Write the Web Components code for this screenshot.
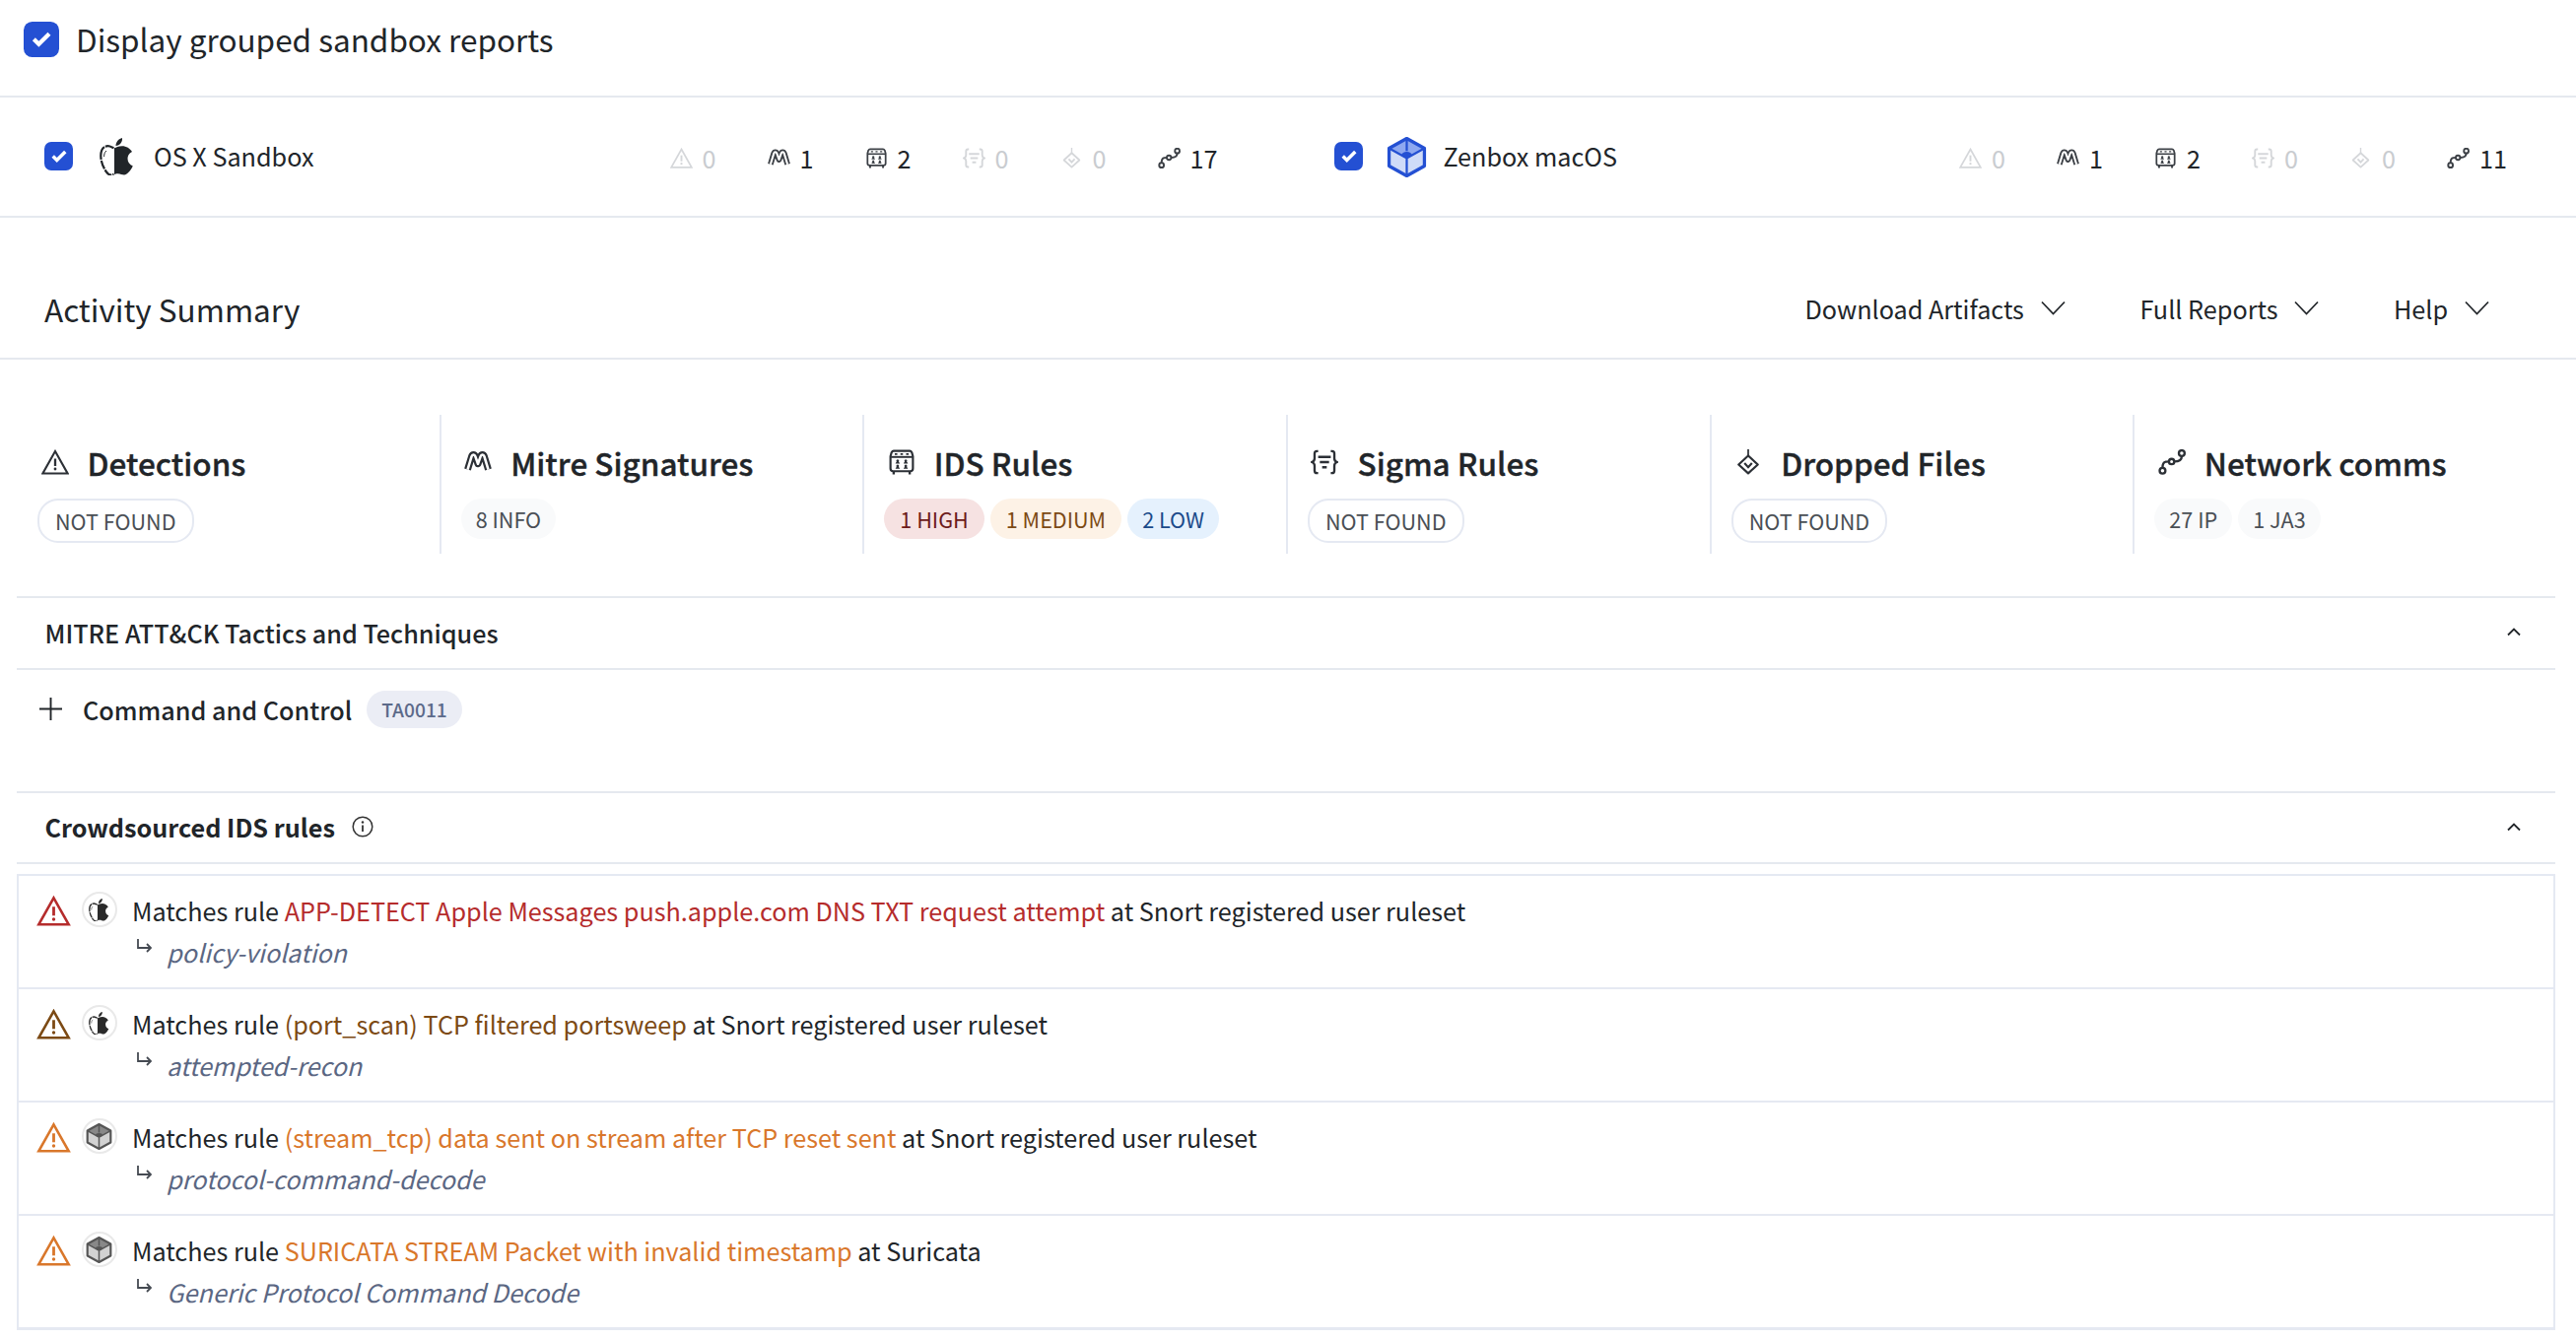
<!doctype html>
<html><head><meta charset="utf-8"><title>Activity Summary</title>
<style>
html,body{margin:0;padding:0;background:#fff;height:1360px;overflow:hidden}
body{font-family:"Noto Sans CJK SC","Noto Sans",sans-serif;color:#212529;font-size:25.2px}
</style></head><body>
<template id="svgs">
<svg id="warn" viewBox="0 0 24 22"><path d="M12 1.6 22.8 20.8H1.2Z" fill="none" stroke="currentColor" stroke-width="1.8" stroke-linejoin="miter"/><path d="M12 8v6.4" stroke="currentColor" stroke-width="2" fill="none"/><circle cx="12" cy="17" r="1.2" fill="currentColor"/></svg>
<svg id="mitre" viewBox="0 0 24 18"><path d="M3 15.500 6.500 4c.7-2 2.500-2 3.200 0L12 10.500 14.300 4c.7-2 2.500-2 3.200 0L21 15.500" fill="none" stroke="currentColor" stroke-width="6" stroke-linejoin="round"/><path d="M3 15.500 6.500 4c.7-2 2.500-2 3.200 0L12 10.500 14.300 4c.7-2 2.500-2 3.200 0L21 15.500" fill="none" stroke="#fff" stroke-width="2.200" stroke-linejoin="round"/></svg>
<svg id="ids" viewBox="0 0 24 24"><path d="M4.500 1.500h15c1 0 1.500.5 2 1.500l1 3.500V18c0 1.500-1 2.500-2.500 2.500H4c-1.500 0-2.500-1-2.500-2.500V6.500l1-3.500c.5-1 1-1.500 2-1.500Z" fill="none" stroke="currentColor" stroke-width="2"/><path d="M2 7.200h20" stroke="currentColor" stroke-width="1.800"/><path d="M5.500 4.400h2.400M10.800 4.400h2.400M16.100 4.400h2.400" stroke="currentColor" stroke-width="1.600"/><path d="M6.200 13.400c0-1 .7-1.400 1.100-1.700a1.300 1.300 0 1 1 1.800 0c.4.300 1.100.7 1.100 1.700ZM13.800 13.400c0-1 .7-1.400 1.100-1.700a1.300 1.300 0 1 1 1.800 0c.4.300 1.100.7 1.100 1.700ZM6.200 18.300c0-1 .7-1.400 1.100-1.700a1.300 1.300 0 1 1 1.800 0c.4.300 1.100.7 1.100 1.700ZM13.800 18.300c0-1 .7-1.400 1.100-1.700a1.300 1.300 0 1 1 1.800 0c.4.300 1.100.7 1.100 1.700Z" fill="currentColor"/><path d="M4.500 20.500V23.500M19.500 20.500V23.500" stroke="currentColor" stroke-width="2.200"/></svg>
<svg id="sigma" viewBox="0 0 24 22"><path d="M6.500 1.500H5.400C4 1.500 3.400 2.300 3.400 3.600v4.200c0 1.600-.8 2.600-2.200 3.200 1.400.6 2.200 1.600 2.200 3.200v4.200c0 1.300.6 2.100 2 2.100h1.100M17.500 1.500h1.100c1.400 0 2 .8 2 2.100v4.200c0 1.600.8 2.600 2.200 3.200-1.400.6-2.200 1.600-2.200 3.200v4.200c0 1.300-.6 2.100-2 2.100h-1.100" fill="none" stroke="currentColor" stroke-width="2"/><path d="M6.500 6.500h11M8 11h8M10 15.500h4" stroke="currentColor" stroke-width="2.200" fill="none"/></svg>
<svg id="drop" viewBox="0 0 20 24"><path d="M10 0v6" stroke="currentColor" stroke-width="1.600"/><path d="M10 6 19 14.300 10 22.500 1 14.300Z" fill="none" stroke="currentColor" stroke-width="2" stroke-linejoin="round"/><path d="M6.500 13l3.500 3.800 3.500-3.800" fill="none" stroke="currentColor" stroke-width="2"/></svg>
<svg id="net" viewBox="0 0 24 22"><circle cx="3.800" cy="18.500" r="2.500" fill="none" stroke="currentColor" stroke-width="2"/><circle cx="20.500" cy="3.300" r="2.500" fill="none" stroke="currentColor" stroke-width="2"/><circle cx="11.700" cy="10.500" r="2.300" fill="none" stroke="currentColor" stroke-width="2"/><path d="M3.800 16c0-3 .6-5 2.800-5.300 1.100-.1 1.800-.2 2.800-.2M14 10.500c3.500 0 6.500-.8 6.500-4.700" fill="none" stroke="currentColor" stroke-width="2"/></svg>
<svg id="apple" viewBox="0 0 35 38"><path d="M15 10.300C17 9.800 19 8.200 23 8.200 27 8.200 31 10.500 33 14 29.500 16 28.500 18.500 28.500 21 28.500 24.500 30.500 27 33.800 28.500 32 32 28.500 37.500 25 37.500 22.500 37.500 21.500 36.200 18.500 36.200 17 36.200 16 36.500 15 36.900Z" fill="currentColor"/><path d="M16.500 8C16.500 4 19.500.8 23 0 23.500 4 20.500 8 16.500 8Z" fill="currentColor"/><path d="M14.500 10.300C12.500 9.400 10.500 8.200 8.500 8.200 4 8.200 1.300 12 1.300 18 1.300 25 4.500 31 7 34.500 8.500 36.500 9.500 37.500 11 37.500 12.500 37.500 13.500 37 14.500 36.800" fill="none" stroke="currentColor" stroke-width="2.200" stroke-dasharray="9 1 14 1 9 1"/><path d="M7 13c-1.800 1.500-2.400 3.500-2.400 6" fill="none" stroke="currentColor" stroke-width="1"/></svg>
<svg id="cube" viewBox="0 0 40 40"><path d="M20 1.500 37.500 11.200V28.800L20 38.500 2.500 28.800V11.200Z" fill="var(--f2)"/><path d="M20 1.500 37.500 11.200 20 21 2.500 11.200Z" fill="var(--f1)"/><path d="M2.500 11.200 20 21 37.500 11.200M20 21V38.500M20 1.500V14" fill="none" stroke="currentColor" stroke-width="2.200"/><path d="M20 1.500 37.500 11.200V28.800L20 38.500 2.500 28.800V11.200Z" fill="none" stroke="currentColor" stroke-width="3.200" stroke-linejoin="round"/><ellipse cx="20" cy="17.500" rx="5" ry="2.800" fill="currentColor"/></svg>
</template>
<script>
const tpl=document.getElementById('svgs').content;
const icon=n=>tpl.getElementById(n).outerHTML;
class Base extends HTMLElement{
 constructor(){super();this.attachShadow({mode:'open'});}
 connectedCallback(){this.shadowRoot.innerHTML=`<style>${this.css()}</style>`+this.html();}
 css(){return ':host{display:block}'} html(){return '<slot></slot>'}
}
class XIcon extends Base{
 css(){return `:host{display:inline-flex;flex:none;width:var(--w,24px);height:var(--h,24px);color:inherit}svg{display:block;width:100%;height:100%}`}
 html(){return icon(this.getAttribute('name'))}
}
class XCheck extends Base{
 css(){return `:host{display:inline-flex;flex:none;width:var(--s,36px);height:var(--s,36px);border-radius:calc(var(--s,36px)*.24);background:#2450d3;align-items:center;justify-content:center}svg{width:62%;height:62%;display:block}`}
 html(){return `<svg viewBox="0 0 20 20"><path d="M3 10.500l4.500 4.500L17 5.500" fill="none" stroke="#fff" stroke-width="3.800"/></svg>`}
}
class XToggle extends Base{
 css(){return `:host{display:flex;align-items:center;gap:17px;height:97px;padding:0 0 0 24px;border-bottom:2px solid #e5e9ef;box-sizing:content-box;font-size:31.5px;line-height:40px}
 x-check{--s:36px;margin-top:-18px} span{margin-top:-20px}`}
 html(){return `<x-check></x-check><span><slot></slot></span>`}
}
class XBar extends Base{
 css(){return `:host{display:grid;grid-template-columns:1309px 1305px;height:120px;border-bottom:2px solid #e5e9ef}`}
}
class XSandbox extends Base{
 css(){return `:host{display:flex;align-items:center;padding:0 var(--pr,35.5px) 0 45px;font-size:25.2px;line-height:34px}
 .l{display:flex;align-items:center;flex:1;min-width:0}
 .l span{margin-top:-2px}
 x-check{--s:29px;margin-right:27px;margin-top:-2px} x-icon{--w:35px;--h:38px;margin-right:20px;color:#212529}
 .cube{--w:41px;--h:41px;color:#2450d3;--f1:#8ea8f0;--f2:#cfdbf8;margin-right:16.5px;margin-left:-3px}
 .r{display:grid;grid-template-columns:repeat(6,99px);margin-top:2px}`}
 html(){const c=this.hasAttribute('cube');return `<div class="l"><x-check></x-check>${c?'<x-icon class="cube" name="cube"></x-icon>':'<x-icon name="apple"></x-icon>'}<span>${this.getAttribute('label')}</span></div><div class="r"><slot></slot></div>`}
}
class XCount extends Base{
 css(){return `:host{display:flex;align-items:center;gap:10px;font-size:25.2px;line-height:34px;color:#212529}
 :host([off]){color:#c9ccd0} x-icon{--w:23px;--h:21px;color:#3c4046}:host([off]) x-icon{color:#d5d7da}`}
 html(){return `<x-icon name="${this.getAttribute('i')}"></x-icon><slot></slot>`}
}
class XHead extends Base{
 css(){return `:host{display:flex;align-items:center;height:144px;box-sizing:border-box;padding:41px 0 0 45px;border-bottom:2px solid #e5e9ef;font-size:31.5px;line-height:44px}
 h2{font:inherit;margin:0;flex:1} .m{display:flex;align-items:center}`}
 html(){return `<h2>${this.getAttribute('label')}</h2><div class="m"><slot></slot></div>`}
}
class XMenu extends Base{
 css(){return `:host{display:flex;align-items:center;gap:17px;font-size:25.2px;line-height:34px;margin-right:75.5px}:host(:last-child){margin-right:88px}svg{width:25px;height:15px;display:block}`}
 html(){return `<slot></slot><svg viewBox="0 0 25 15"><path d="M1 1.500 12.500 13.500 24 1.500" fill="none" stroke="#212529" stroke-width="1.700"/></svg>`}
}
class XStrip extends Base{
 css(){return `:host{display:grid;grid-template-columns:repeat(6,1fr);margin:56px 18px 0;height:184px;box-sizing:border-box;padding-bottom:43px}`}
}
class XStat extends Base{
 css(){return `:host{display:block;height:141px;box-sizing:border-box;padding:31px 0 0 20px;border-right:2px solid #e5e9f2}
 :host(:last-child){border-right:0}
 .t{display:flex;align-items:center;height:34px;margin-bottom:20px;font-size:31.5px;line-height:34px;font-weight:500;-webkit-text-stroke:.35px currentColor}
 .ib{width:51px;flex:none;display:flex;align-items:center;padding-left:4px;box-sizing:border-box;margin-left:-.5px}
 .ib x-icon{--w:28px;--h:26px;color:#2c3036}
 .p{display:flex;gap:6px}`}
 html(){return `<div class="t"><span class="ib"><x-icon name="${this.getAttribute('i')}"></x-icon></span><span>${this.getAttribute('label')}</span></div><div class="p"><slot></slot></div>`}
}
class XPill extends Base{
 css(){return `:host{display:inline-flex;align-items:center;height:41px;padding:0 15px;border-radius:21px;font-size:21.6px;line-height:30px;background:var(--b,#f9fafb);color:var(--c,#4a4f55);white-space:nowrap;box-sizing:border-box}
 :host([k=nf]){height:45px;padding:0 16px;background:#fff;border:2.500px solid #e5e9f2}
 :host([k=high]){--b:#f6e2e2;--c:#6d1a1a;padding:0 16px} :host([k=med]){--b:#fdf2e6;--c:#7c4a14;padding:0 16px} :host([k=low]){--b:#e5f1fd;--c:#1a4a8a}
 :host([k=tag]){--b:#ebedf5;--c:#5c6a8a;height:38px;padding:0 15px;border-radius:19px;font-size:19.2px}`}
}
class XSection extends Base{
 css(){return `:host{display:flex;align-items:center;height:var(--ht,75px);margin:0 21px 0 17px;padding:0 35.5px 2px 28.5px;box-sizing:border-box;border-top:2px solid #e5e9ef;border-bottom:2px solid #e5e9ef;font-size:25.2px;line-height:34px;font-weight:500}
 :host([b]){font-weight:700;--ht:74px}
 .s{flex:1;display:flex;align-items:center;gap:17px} svg.c{width:14px;height:9px;display:block} svg.i{width:22px;height:22px;display:block}`}
 html(){const inf=this.hasAttribute('info');return `<div class="s"><span>${this.getAttribute('label')}</span>${inf?'<svg class="i" viewBox="0 0 22 22"><circle cx="11" cy="11" r="9.800" fill="none" stroke="#333" stroke-width="1.500"/><path d="M11 9.500v6.500" stroke="#333" stroke-width="1.800"/><circle cx="11" cy="6.500" r="1.200" fill="#333"/></svg>':''}</div><svg class="c" viewBox="0 0 14 9"><path d="M1 7.500 7 1.500 13 7.500" fill="none" stroke="#212529" stroke-width="1.800"/></svg>`}
}
class XTactic extends Base{
 css(){return `:host{display:flex;align-items:center;height:123px;box-sizing:border-box;padding:0 0 44px 40px;gap:21px;font-size:25.2px;line-height:34px;font-weight:500}
 svg{width:23px;height:23px;display:block} .m{margin-left:-6px}`}
 html(){return `<svg viewBox="0 0 23 23"><path d="M0 11.500h23M11.500 0v23" stroke="#212529" stroke-width="1.900"/></svg><span>${this.getAttribute('label')}</span><span class="m"><slot></slot></span>`}
}
class XRules extends Base{
 css(){return `:host{display:block;margin:10px 21px 0 17px;border:2px solid #e5e9f2;border-bottom-width:1px}`}
}
class XRule extends Base{
 css(){return `:host{display:block;height:115px;box-sizing:border-box;padding:17px 0 0 18px;border-bottom:2px solid #e5e9f2;font-size:25.2px;line-height:36px;color:#212529}
 .a{display:flex;align-items:flex-start} .w{--w:35px;--h:31px;margin-top:3px;margin-right:11px;color:var(--c)}
 .o{width:36px;height:36px;border-radius:50%;border:2px solid #e9e9e9;box-sizing:border-box;display:flex;align-items:center;justify-content:center;margin-right:15px;margin-top:-1px;flex:none;background:#fff}
 .o x-icon{--w:21px;--h:23px;color:#2a2a2a;margin-left:-2px}.o .cb{--w:27px;--h:27px;color:#555;--f1:#888;--f2:#d2d2d2}
 b{font-weight:400;color:var(--c)}
 .b{display:flex;align-items:center;margin:6px 0 0 101px;height:36px}
 svg.ar{width:17px;height:15px;display:block;margin-top:-12px;margin-right:14px}
 i{color:#5b6783;font-style:italic}`}
 html(){const k=this.getAttribute('os');const ic=k=='cube'?'<x-icon class="cb" name="cube"></x-icon>':'<x-icon name="apple"></x-icon>';
 return `<div class="a"><x-icon class="w" name="warn"></x-icon><span class="o">${ic}</span><span>Matches rule <b>${this.getAttribute('rule')}</b> at ${this.getAttribute('src')}</span></div><div class="b"><svg class="ar" viewBox="0 0 17 15"><path d="M2 0v9h13M11 5l4 4-4 4" fill="none" stroke="#454a52" stroke-width="1.800"/></svg><i>${this.getAttribute('cat')}</i></div>`}
}
const defs={'x-icon':XIcon,'x-check':XCheck,'x-toggle':XToggle,'x-bar':XBar,'x-sandbox':XSandbox,'x-count':XCount,'x-head':XHead,'x-menu':XMenu,'x-strip':XStrip,'x-stat':XStat,'x-pill':XPill,'x-section':XSection,'x-tactic':XTactic,'x-rules':XRules,'x-rule':XRule};
for(const k in defs)customElements.define(k,defs[k]);
</script>
<x-toggle>Display grouped sandbox reports</x-toggle>
<x-bar>
<x-sandbox label="OS X Sandbox"><x-count off i="warn">0</x-count><x-count i="mitre">1</x-count><x-count i="ids">2</x-count><x-count off i="sigma">0</x-count><x-count off i="drop">0</x-count><x-count i="net">17</x-count></x-sandbox>
<x-sandbox cube style="--pr:32px" label="Zenbox macOS"><x-count off i="warn">0</x-count><x-count i="mitre">1</x-count><x-count i="ids">2</x-count><x-count off i="sigma">0</x-count><x-count off i="drop">0</x-count><x-count i="net">11</x-count></x-sandbox>
</x-bar>
<x-head label="Activity Summary"><x-menu>Download Artifacts</x-menu><x-menu>Full Reports</x-menu><x-menu>Help</x-menu></x-head>
<x-strip>
<x-stat i="warn" label="Detections"><x-pill k="nf">NOT FOUND</x-pill></x-stat>
<x-stat i="mitre" label="Mitre Signatures"><x-pill>8 INFO</x-pill></x-stat>
<x-stat i="ids" label="IDS Rules"><x-pill k="high">1 HIGH</x-pill><x-pill k="med">1 MEDIUM</x-pill><x-pill k="low">2 LOW</x-pill></x-stat>
<x-stat i="sigma" label="Sigma Rules"><x-pill k="nf">NOT FOUND</x-pill></x-stat>
<x-stat i="drop" label="Dropped Files"><x-pill k="nf">NOT FOUND</x-pill></x-stat>
<x-stat i="net" label="Network comms"><x-pill>27 IP</x-pill><x-pill>1 JA3</x-pill></x-stat>
</x-strip>
<x-section label="MITRE ATT&amp;CK Tactics and Techniques"></x-section>
<x-tactic label="Command and Control"><x-pill k="tag">TA0011</x-pill></x-tactic>
<x-section b info label="Crowdsourced IDS rules"></x-section>
<x-rules>
<x-rule os="apple" style="--c:#b52c2c" rule="APP-DETECT Apple Messages push.apple.com DNS TXT request attempt" src="Snort registered user ruleset" cat="policy-violation"></x-rule>
<x-rule os="apple" style="--c:#7c4a14" rule="(port_scan) TCP filtered portsweep" src="Snort registered user ruleset" cat="attempted-recon"></x-rule>
<x-rule os="cube" style="--c:#d9772b" rule="(stream_tcp) data sent on stream after TCP reset sent" src="Snort registered user ruleset" cat="protocol-command-decode"></x-rule>
<x-rule os="cube" style="--c:#d9772b" rule="SURICATA STREAM Packet with invalid timestamp" src="Suricata" cat="Generic Protocol Command Decode"></x-rule>
</x-rules>
</body></html>
